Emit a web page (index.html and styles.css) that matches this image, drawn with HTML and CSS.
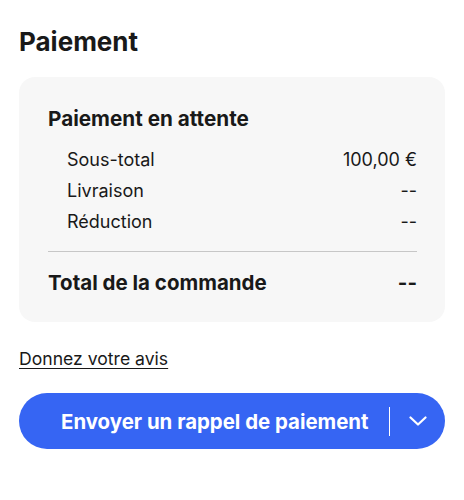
FILE: index.html
```html
<!DOCTYPE html>
<html lang="fr">
<head>
<meta charset="utf-8">
<link rel="stylesheet" href="styles.css">
</head>
<body>
<main class="page">
  <h1 class="heading">Paiement</h1>
  <section class="card">
    <h2 class="card-title">Paiement en attente</h2>
    <div class="rows">
      <div class="row"><span>Sous-total</span><span>100,00 €</span></div>
      <div class="row"><span>Livraison</span><span>--</span></div>
      <div class="row"><span>Réduction</span><span>--</span></div>
    </div>
    <hr class="divider">
    <div class="total"><span>Total de la commande</span><span>--</span></div>
  </section>
  <a class="feedback" href="#">Donnez votre avis</a>
  <div class="split-btn">
    <button class="btn-main" type="button">Envoyer un rappel de paiement</button>
    <span class="btn-sep"></span>
    <button class="btn-menu" type="button" aria-label="Plus">
      <svg width="18" height="10" viewBox="0 0 18 10" fill="none"><path d="M1.5 1.5 L9 8.5 L16.5 1.5" stroke="#fff" stroke-width="2.2" stroke-linecap="round" stroke-linejoin="round"/></svg>
    </button>
  </div>
</main>
</body>
</html>
```
FILE: styles.css
```css
* { box-sizing: border-box; }
html, body { margin: 0; padding: 0; background: #fff; }
body {
  font-family: Inter, "Noto Sans", "Liberation Sans", sans-serif;
  color: #191919;
}
.page {
  padding: 26px 19px 0 19px;
  display: flex;
  flex-direction: column;
}
.heading {
  margin: 0;
  font-size: 26px;
  line-height: 32px;
  font-weight: 700;
}
.card {
  margin-top: 19px;
  background: #f7f7f7;
  border-radius: 16px;
  padding: 30px 28px 27px 29px;
}
.card-title {
  margin: 0;
  font-size: 20.7px;
  line-height: 24px;
  font-weight: 700;
}
.rows {
  margin-top: 13px;
  padding-left: 19px;
}
.row {
  display: flex;
  justify-content: space-between;
  font-size: 18px;
  line-height: 31px;
}
.divider {
  margin: 14px 0 0 0;
  border: 0;
  height: 1px;
  background: #c7c7c7;
}
.total {
  margin-top: 19px;
  display: flex;
  justify-content: space-between;
  font-size: 20.5px;
  line-height: 24px;
  font-weight: 700;
}
.feedback {
  margin-top: 25px;
  align-self: flex-start;
  font-size: 17.6px;
  line-height: 24px;
  color: #191919;
  text-decoration: underline;
  text-underline-offset: 3px;
  text-decoration-thickness: 1px;
}
.split-btn {
  margin-top: 22px;
  height: 56px;
  border-radius: 28px;
  background: #3665f3;
  display: flex;
  align-items: center;
}
.btn-main {
  flex: 1;
  height: 100%;
  background: none;
  border: 0;
  color: #fff;
  font-family: inherit;
  font-size: 20.4px;
  font-weight: 700;
  text-align: left;
  padding: 0 0 0 42px;
}
.btn-sep {
  width: 1.5px;
  height: 29px;
  background: #fff;
}
.btn-menu {
  width: 55px;
  height: 100%;
  background: none;
  border: 0;
  padding: 0;
  display: flex;
  align-items: center;
  justify-content: center;
}
.btn-menu svg { display: block; }
```
